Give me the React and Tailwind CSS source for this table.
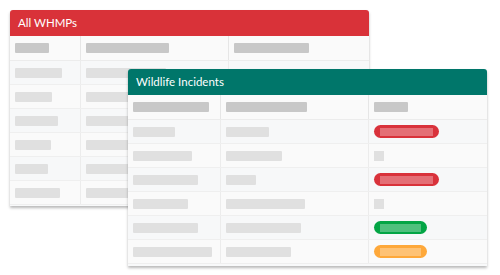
import React from 'react';

const Bar = ({ w, dark }) => (
  <div className={`h-[10px] rounded-[1px] ${dark ? 'bg-[#c8c8c8]' : 'bg-[#e0e0e0]'}`} style={{ width: w }} />
);

const Pill = ({ color, w }) => {
  const tones = {
    red: 'bg-[#d9323b]',
    green: 'bg-[#03a545]',
    orange: 'bg-[#fea83a]',
  };
  return (
    <div className={`h-[13px] rounded-full flex items-center px-[6px] ${tones[color]}`} style={{ width: w }}>
      <div className="h-[8px] w-full bg-white/30" />
    </div>
  );
};

const Table = ({ title, headerBg, cols, headers, rows }) => (
  <div className="w-full h-full bg-[#f8f9fa] rounded-t-[3px] overflow-hidden shadow-[0_2px_3px_rgba(0,0,0,0.28)] flex flex-col">
    <div className={`h-[26px] shrink-0 flex items-center px-2 text-white text-[11.5px] font-['Lato',sans-serif] ${headerBg}`}>
      {title}
    </div>
    <div className={`grid ${cols} h-[25px] bg-[#fafafa] border-b border-[#ececec]`}>
      {headers.map((w, i) => (
        <div key={i} className={`flex items-center px-[5px] ${i > 0 ? 'border-l border-[#e6e6e6]' : ''}`}>
          {w ? <Bar w={w} dark /> : null}
        </div>
      ))}
    </div>
    {rows.map((row, r) => (
      <div key={r} className={`grid ${cols} h-[24px] border-b border-[#efefef] ${r % 2 ? 'bg-[#fafafa]' : 'bg-[#f7f8f9]'}`}>
        {row.map((cell, i) => (
          <div key={i} className={`flex items-center px-[5px] ${i > 0 ? 'border-l border-[#ececec]' : ''}`}>
            {cell}
          </div>
        ))}
      </div>
    ))}
  </div>
);

export default function App() {
  const whmpRows = [
    [<Bar w={47} />, <Bar w={80} />, null],
    [<Bar w={37} />, <Bar w={70} />, null],
    [<Bar w={43} />, <Bar w={76} />, null],
    [<Bar w={36} />, <Bar w={70} />, null],
    [<Bar w={33} />, <Bar w={72} />, null],
    [<Bar w={45} />, <Bar w={78} />, null],
  ];
  const incidentRows = [
    [<Bar w={42} />, <Bar w={43} />, <Pill color="red" w={65} />],
    [<Bar w={59} />, <Bar w={56} />, <div className="h-[10px] w-[10px] bg-[#e0e0e0]" />],
    [<Bar w={65} />, <Bar w={30} />, <Pill color="red" w={65} />],
    [<Bar w={55} />, <Bar w={79} />, <div className="h-[10px] w-[10px] bg-[#e0e0e0]" />],
    [<Bar w={65} />, <Bar w={75} />, <Pill color="green" w={53} />],
    [<Bar w={79} />, <Bar w={65} />, <Pill color="orange" w={53} />],
  ];

  return (
    <div className="relative w-[500px] h-[275px] bg-white overflow-hidden font-['Lato',sans-serif]">
      <div className="absolute left-[10px] top-[10px] w-[359px] h-[196px]">
        <Table
          title="All WHMPs"
          headerBg="bg-[#d93239]"
          cols="grid-cols-[70px_148px_1fr]"
          headers={[34, 83, 75]}
          rows={whmpRows}
        />
      </div>
      <div className="absolute left-[128px] top-[69px] w-[359px] h-[197px]">
        <Table
          title="Wildlife Incidents"
          headerBg="bg-[#00766a]"
          cols="grid-cols-[92px_148px_1fr]"
          headers={[76, 81, 34]}
          rows={incidentRows}
        />
      </div>
    </div>
  );
}
